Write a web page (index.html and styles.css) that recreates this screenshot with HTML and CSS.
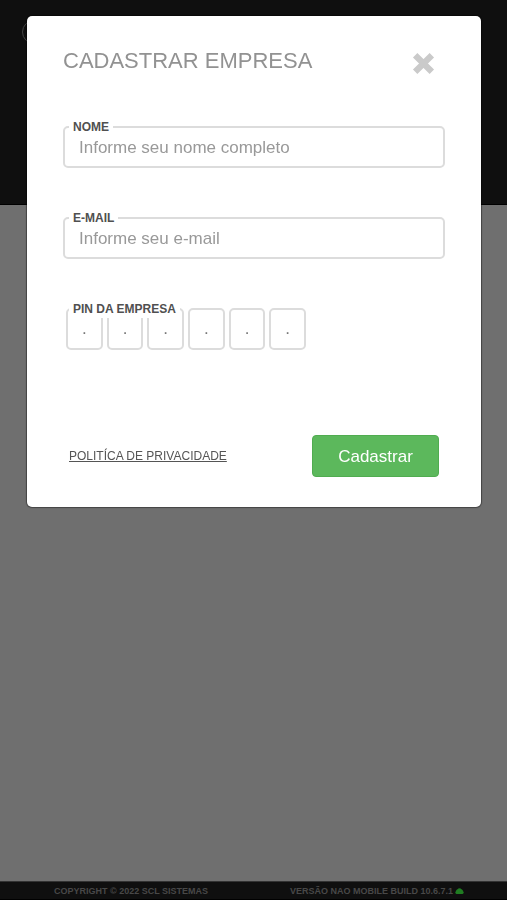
FILE: index.html
```html
<!DOCTYPE html>
<html lang="pt-BR">
<head>
<meta charset="utf-8">
<meta name="viewport" content="width=device-width, initial-scale=1">
<title>Cadastrar Empresa</title>
<link rel="stylesheet" href="styles.css">
</head>
<body>
<div class="page">
  <header class="topbar"><span class="logo-ring"></span></header>
  <main class="content"></main>
  <footer class="footer">
    <span>COPYRIGHT © 2022 SCL SISTEMAS</span>
    <span class="build">VERSÃO NAO MOBILE BUILD 10.6.7.1
      <svg class="cloud" viewBox="0 0 18 12" aria-hidden="true"><path d="M3 12a3 3 0 0 1-1-5.500A4 4 0 0 1 5 2.500A5 5 0 0 1 13 2.500A4 4 0 0 1 16 6.500A3 3 0 0 1 15 12z"/></svg>
    </span>
  </footer>
</div>
<div class="overlay">
  <section class="modal" role="dialog" aria-modal="true" aria-labelledby="title">
    <div class="modal-head">
      <h1 id="title">CADASTRAR EMPRESA</h1>
      <button class="close" type="button" aria-label="Fechar">
        <svg viewBox="0 0 24 24" aria-hidden="true"><path d="M4 4L20 20M20 4L4 20"/></svg>
      </button>
    </div>
    <form class="form">
      <div class="field">
        <label for="nome">NOME</label>
        <input class="text" id="nome" type="text" placeholder="Informe seu nome completo">
      </div>
      <div class="field">
        <label for="email">E-MAIL</label>
        <input class="text" id="email" type="email" placeholder="Informe seu e-mail">
      </div>
      <div class="field">
        <label for="pin1">PIN DA EMPRESA</label>
        <div class="pins">
          <input id="pin1" type="text" maxlength="1" placeholder="." aria-label="PIN dígito 1">
          <input type="text" maxlength="1" placeholder="." aria-label="PIN dígito 2">
          <input type="text" maxlength="1" placeholder="." aria-label="PIN dígito 3">
          <input type="text" maxlength="1" placeholder="." aria-label="PIN dígito 4">
          <input type="text" maxlength="1" placeholder="." aria-label="PIN dígito 5">
          <input type="text" maxlength="1" placeholder="." aria-label="PIN dígito 6">
        </div>
      </div>
      <div class="actions">
        <a href="#privacidade">POLITÍCA DE PRIVACIDADE</a>
        <button class="submit" type="submit">Cadastrar</button>
      </div>
    </form>
  </section>
</div>
</body>
</html>
```

FILE: styles.css
```css
* {
  box-sizing: border-box;
}

body {
  margin: 0;
  font-family: "Liberation Sans", Arial, sans-serif;
}

input,
button {
  font-family: inherit;
}

.page {
  display: flex;
  flex-direction: column;
  min-height: 100vh;
  background: #6f6f6f;
}

.topbar {
  height: 205px;
  padding: 20px 22px;
  background: #0f0f0f;
  border-bottom: 1px solid #000;
}

.logo-ring {
  display: block;
  width: 24px;
  height: 24px;
  border: 1px solid #444;
  border-radius: 50%;
}

.content {
  flex: 1;
}

.footer {
  display: flex;
  justify-content: space-between;
  align-items: center;
  height: 19px;
  padding: 0 43px 0 54px;
  background: #0f0f0f;
  border-top: 1px solid #333;
  border-bottom: 1px solid #000;
  color: #484848;
  font-size: 9px;
  font-weight: bold;
}

.build {
  display: flex;
  align-items: center;
  gap: 2px;
}

.cloud {
  width: 9px;
  height: 6px;
  fill: #207d22;
}

.overlay {
  position: fixed;
  inset: 0;
  padding: 16px 26px 16px 27px;
}

.modal {
  padding: 32px 36px 30px;
  background: #fff;
  border-radius: 5px;
  box-shadow: 0 0 1px 1px rgba(0, 0, 0, 0.4);
}

.modal-head {
  display: flex;
  justify-content: space-between;
  align-items: flex-start;
  height: 62px;
  padding-right: 9px;
}

h1 {
  margin: 0;
  color: #929292;
  font-size: 22px;
  line-height: 26px;
  font-weight: normal;
}

.close {
  margin-top: 3px;
  padding: 0;
  border: 0;
  background: none;
  line-height: 0;
}

.close svg {
  width: 25px;
  height: 25px;
  stroke: #cacaca;
  stroke-width: 6;
}

.form {
  display: flex;
  flex-direction: column;
}

.field {
  position: relative;
  height: 91px;
  padding-top: 16px;
}

.field label {
  position: absolute;
  top: 8px;
  left: 6px;
  padding: 0 4px;
  background: #fff;
  color: #505050;
  font-size: 12px;
  line-height: 18px;
  font-weight: bold;
}

.text {
  display: block;
  width: 100%;
  height: 42px;
  padding: 2px 14px 0;
  border: 2px solid #dcdcdc;
  border-radius: 5px;
  background: #fff;
  font-size: 17px;
}

input::placeholder {
  color: #999;
  opacity: 1;
}

.pins {
  display: flex;
  gap: 4px;
  width: 243px;
  padding-left: 3px;
}

.pins input {
  flex: 1;
  min-width: 0;
  height: 42px;
  padding: 0;
  border: 2px solid #dcdcdc;
  border-radius: 5px;
  font-size: 17px;
  text-align: center;
}

.pins input::placeholder {
  color: #777;
}

.actions {
  display: flex;
  justify-content: space-between;
  align-items: center;
  margin-top: 52px;
  padding: 0 6px;
}

.actions a {
  color: #555;
  font-size: 12px;
}

.submit {
  width: 127px;
  height: 42px;
  padding: 2px 0 0;
  border: 1px solid #50ac50;
  border-radius: 4px;
  background: #5cb85c;
  color: #fff;
  font-size: 17px;
}
```
